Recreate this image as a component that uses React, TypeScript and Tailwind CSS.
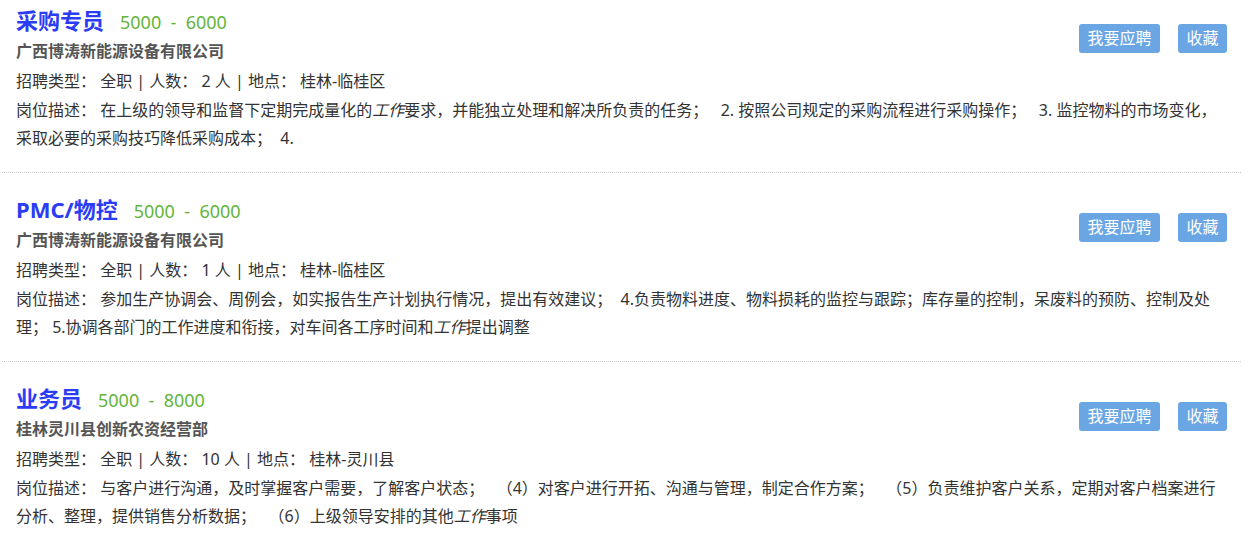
import React from 'react';

interface Job {
  id: number;
  title: string;
  salary: [string, string];
  company: string;
  count: number;
  location: string;
  desc: React.ReactNode;
}

const Em = ({ children }: { children: React.ReactNode }) => <i className="italic">{children}</i>;

const jobs: Job[] = [
  {
    id: 1,
    title: '采购专员',
    salary: ['5000', '6000'],
    company: '广西博涛新能源设备有限公司',
    count: 2,
    location: '桂林-临桂区',
    desc: (
      <>
        在上级的领导和监督下定期完成量化的<Em>工作</Em>要求，并能独立处理和解决所负责的任务；{'\u00a0\u00a0 '}2. 按照公司规定的采购流程进行采购操作；{'\u00a0\u00a0 '}3. 监控物料的市场变化，采取必要的采购技巧降低采购成本；{'\u00a0 '}4.
      </>
    ),
  },
  {
    id: 2,
    title: 'PMC/物控',
    salary: ['5000', '6000'],
    company: '广西博涛新能源设备有限公司',
    count: 1,
    location: '桂林-临桂区',
    desc: (
      <>
        参加生产协调会、周例会，如实报告生产计划执行情况，提出有效建议；{'\u00a0 '}4.负责物料进度、物料损耗的监控与跟踪；库存量的控制，呆废料的预防、控制及处理； 5.协调各部门的工作进度和衔接，对车间各工序时间和<Em>工作</Em>提出调整
      </>
    ),
  },
  {
    id: 3,
    title: '业务员',
    salary: ['5000', '8000'],
    company: '桂林灵川县创新农资经营部',
    count: 10,
    location: '桂林-灵川县',
    desc: (
      <>
        与客户进行沟通，及时掌握客户需要，了解客户状态；{'\u00a0\u00a0 '}（4）对客户进行开拓、沟通与管理，制定合作方案；{'\u00a0\u00a0 '}（5）负责维护客户关系，定期对客户档案进行分析、整理，提供销售分析数据；{'\u00a0\u00a0 '}（6）上级领导安排的其他<Em>工作</Em>事项
      </>
    ),
  },
];

function JobRow({ job, first }: { job: Job; first: boolean }) {
  return (
    <div className={`px-[14px] pb-5 ${first ? 'pt-1' : 'pt-5 border-t border-dotted border-[#c8c8c8]'}`}>
      <div className="flex items-start justify-between">
        <div>
          <div className="flex items-baseline h-8">
            <span className="text-[22px] leading-8 font-bold text-[#2a3cf4]">{job.title}</span>
            <span className="ml-4 text-[18px] text-[#63b43a] whitespace-pre">
              {job.salary[0]}  -  {job.salary[1]}
            </span>
          </div>
          <div className="text-base leading-[30px] font-bold text-[#555]">{job.company}</div>
          <div className="text-base leading-[30px] text-[#333]">
            招聘类型： 全职 | 人数： {job.count} 人 | 地点： {job.location}
          </div>
        </div>
        <div className="flex gap-[18px] mt-5">
          <button className="h-[29px] px-[8.5px] rounded-[3px] bg-[#6ba6e4] text-white text-base leading-[29px]">
            我要应聘
          </button>
          <button className="h-[29px] px-[8.5px] rounded-[3px] bg-[#6ba6e4] text-white text-base leading-[29px]">
            收藏
          </button>
        </div>
      </div>
      <div className="text-base leading-[28px] text-[#333]">岗位描述： {job.desc}</div>
    </div>
  );
}

export default function App() {
  return (
    <div
      className="w-[1249px] h-[541px] bg-white overflow-hidden"
      style={{ fontFamily: '"Noto Sans", "Noto Sans CJK SC", sans-serif' }}
    >
      <div className="ml-[2px] w-[1239px]">
        {jobs.map((job, i) => (
          <JobRow key={job.id} job={job} first={i === 0} />
        ))}
      </div>
    </div>
  );
}
